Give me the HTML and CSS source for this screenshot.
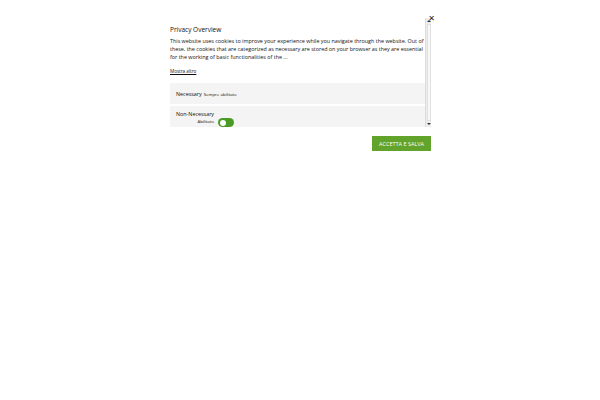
FILE: index.html
```html
<!DOCTYPE html>
<html>
<head>
<meta charset="utf-8">
<link rel="stylesheet" href="styles.css">
</head>
<body>
<div class="modal">
  <button class="close" aria-label="Close">&#x2715;</button>
  <div class="frame">
    <div class="content">
      <h4 class="title">Privacy Overview</h4>
      <p class="text">This website uses cookies to improve your experience while you navigate through the website. Out of these, the cookies that are categorized as necessary are stored on your browser as they are essential for the working of basic functionalities of the ...</p>
      <a class="more" href="#">Mostra altro</a>
      <div class="row">
        <span class="row-name">Necessary</span>
        <span class="row-note">Sempre abilitato</span>
      </div>
      <div class="row row-switch">
        <div class="row-label">
          <span class="row-name">Non-Necessary</span>
          <span class="row-note">Abilitato</span>
        </div>
        <span class="toggle"><span class="knob"></span></span>
      </div>
    </div>
    <div class="scrollbar">
      <span class="arrow up"></span>
      <span class="thumb"></span>
      <span class="arrow down"></span>
    </div>
  </div>
  <div class="actions">
    <button class="accept">ACCETTA E SALVA</button>
  </div>
</div>
</body>
</html>
```
FILE: styles.css
```css
html, body {
  margin: 0;
  padding: 0;
  background: #ffffff;
}
body {
  font-family: "Open Sans", "Liberation Sans", sans-serif;
  color: #111111;
  width: 600px;
  height: 400px;
}
.modal {
  position: relative;
  width: 261px;
  margin-left: 170px;
  padding-top: 18px;
}
.close {
  position: absolute;
  right: -4px;
  top: 15px;
  border: 0;
  background: transparent;
  padding: 0;
  font-size: 8px;
  line-height: 8px;
  color: #222;
  font-family: "DejaVu Sans", sans-serif;
}
.frame {
  display: flex;
  height: 109px;
}
.content {
  flex: 1;
  overflow: hidden;
  padding-top: 7px;
}
.title {
  margin: 0 0 2px;
  font-size: 6.5px;
  font-weight: 400;
  line-height: 10px;
}
.text {
  margin: 0 0 7px;
  font-size: 5.4px;
  line-height: 8px;
}
.more {
  display: block;
  font-size: 4.6px;
  line-height: 7px;
  color: #111;
  text-decoration: underline;
  margin-bottom: 8px;
}
.row {
  background: #f4f4f4;
  height: 21px;
  display: flex;
  align-items: center;
  padding-left: 6px;
  gap: 2px;
  margin-bottom: 2px;
}
.row-name {
  font-size: 5.4px;
}
.row-note {
  font-size: 4.3px;
}
.row-switch {
  align-items: flex-start;
  padding-top: 5px;
  height: 30px;
  box-sizing: border-box;
  gap: 4px;
}
.row-label {
  display: flex;
  flex-direction: column;
  align-items: flex-end;
}
.row-label .row-name {
  line-height: 7px;
}
.row-label .row-note {
  line-height: 6px;
}
.toggle {
  margin-top: 7px;
  width: 16px;
  height: 9px;
  border-radius: 5px;
  background: #4a9b26;
  display: flex;
  align-items: center;
  padding-left: 1.5px;
  box-sizing: border-box;
}
.knob {
  width: 6px;
  height: 6px;
  border-radius: 50%;
  background: #ffffff;
}
.scrollbar {
  width: 6px;
  background: #ededed;
  border-left: 1px solid #dcdcdc;
  display: flex;
  flex-direction: column;
  align-items: center;
  box-sizing: border-box;
}
.arrow {
  width: 0;
  height: 0;
  border-left: 2px solid transparent;
  border-right: 2px solid transparent;
  margin: 2px 0;
}
.arrow.up {
  border-bottom: 2px solid #333;
}
.arrow.down {
  border-top: 2px solid #333;
}
.thumb {
  flex: 1;
  width: 4px;
  background: #f8f8f8;
  border: 1px solid #e0e0e0;
  box-sizing: border-box;
}
.actions {
  display: flex;
  justify-content: flex-end;
  padding-top: 9px;
}
.accept {
  background: #61a32b;
  color: #ffffff;
  border: 0;
  width: 59px;
  height: 15px;
  padding: 0;
  font-family: "Open Sans", "Liberation Sans", sans-serif;
  font-size: 5.5px;
}
```
